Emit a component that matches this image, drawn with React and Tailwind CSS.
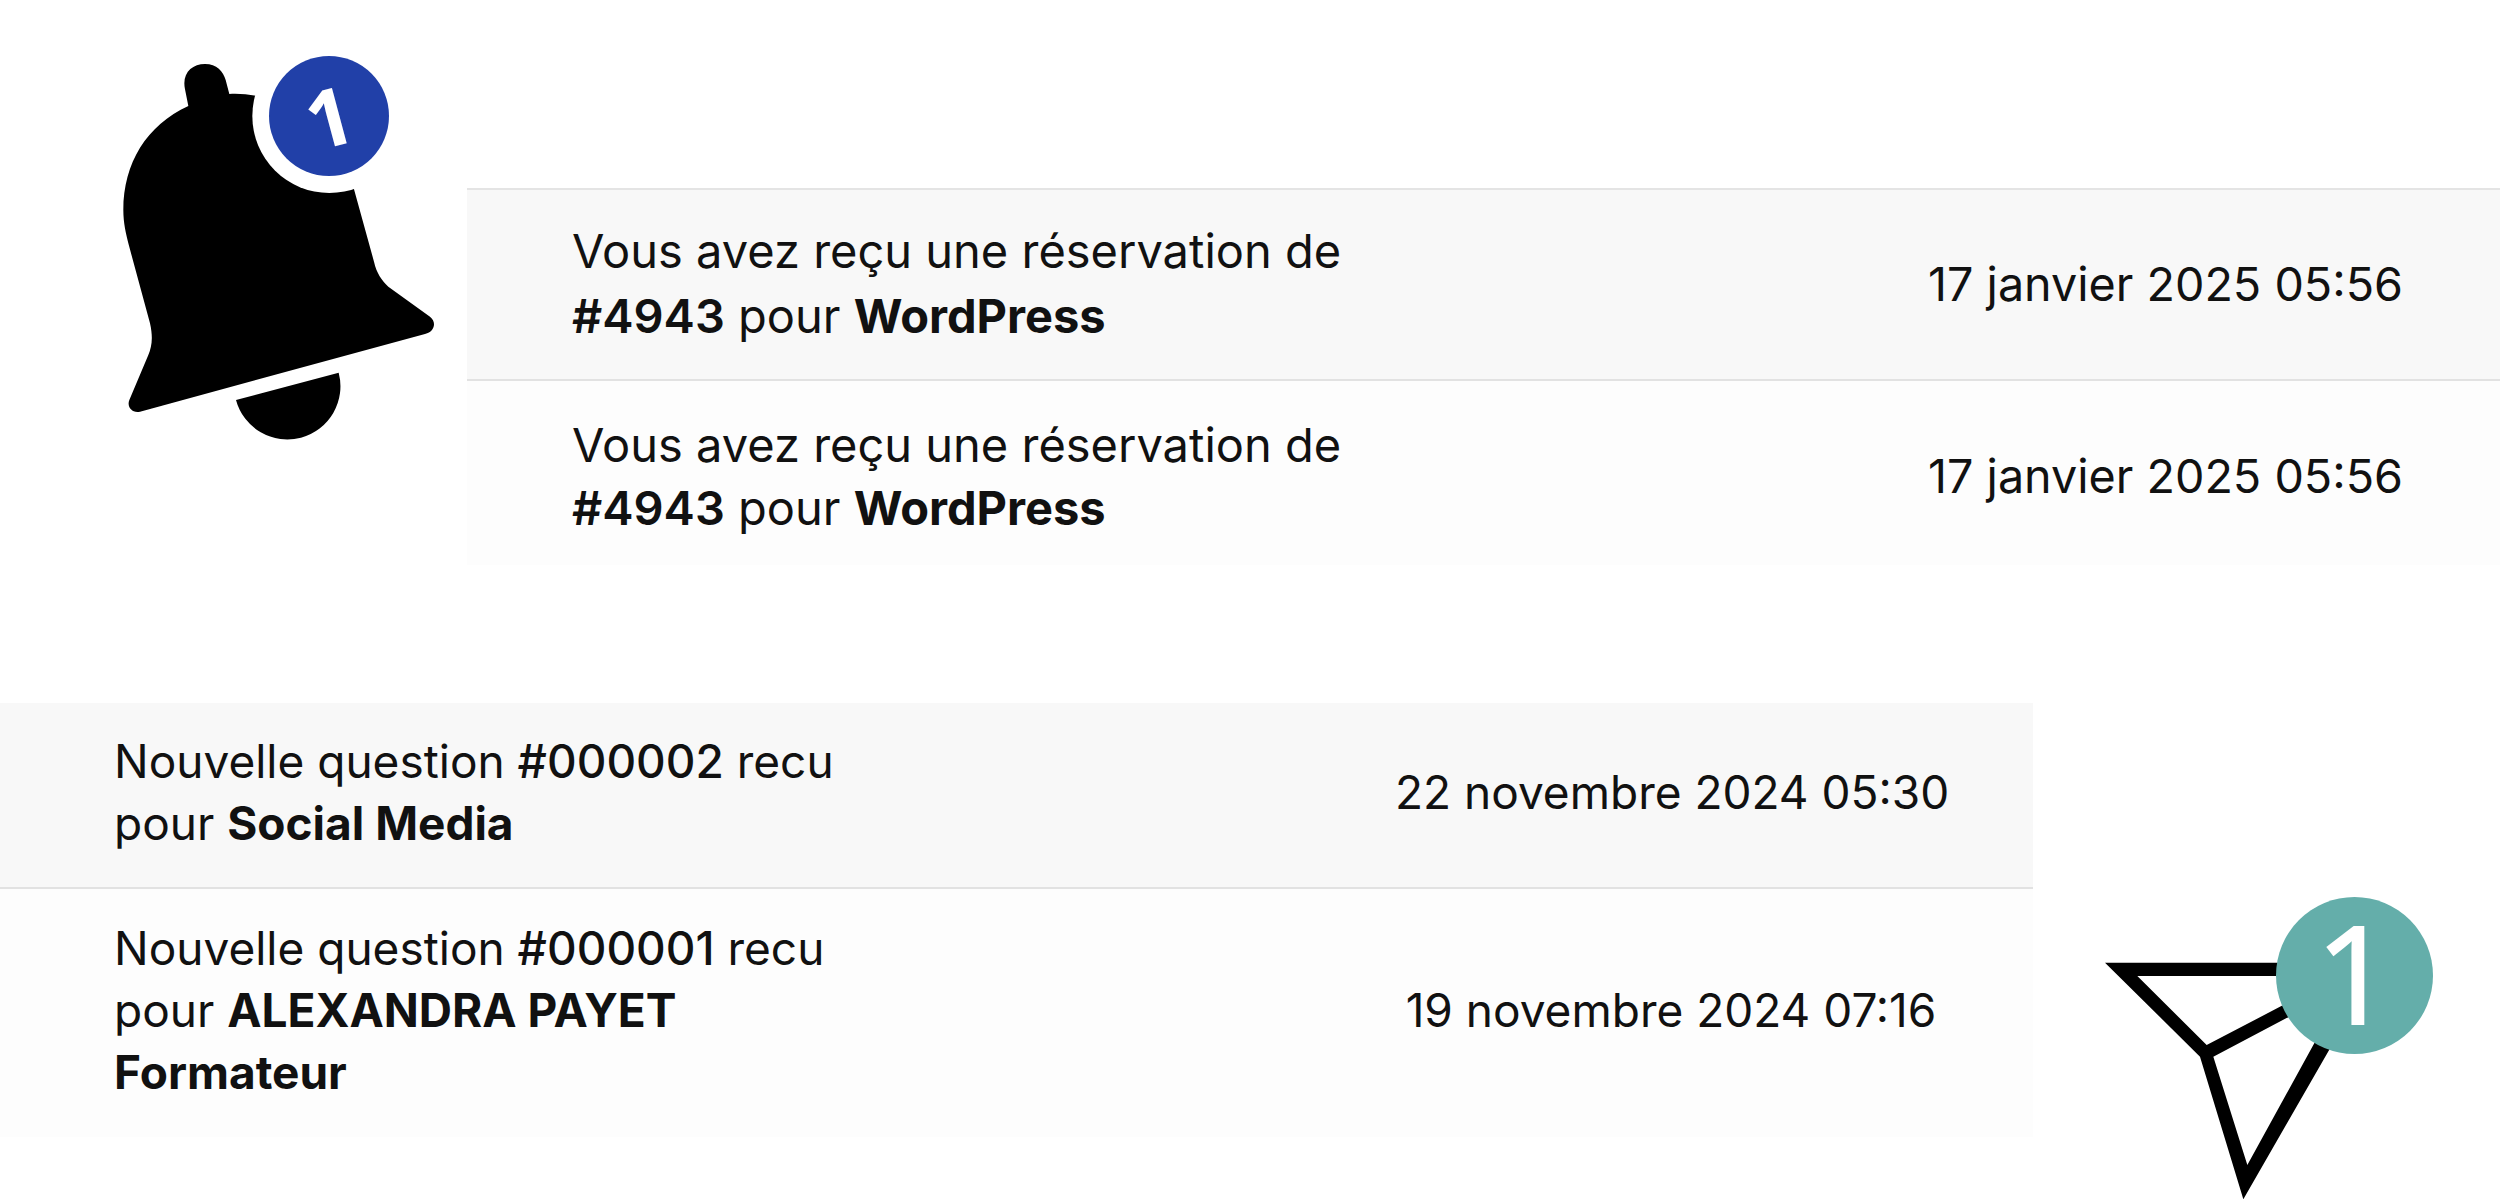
const FONT = "font-['Inter','Liberation_Sans',sans-serif]";

function BellIcon() {
  return (
    <div className="relative w-[400px] h-[440px] ml-[80px] mt-[30px] shrink-0">
      <svg viewBox="0 0 1200 1320" width="400" height="440" className="block">
        <path
          d="M325 228 L315 178 C305 130 335 102 375 102 C410 102 430 125 437 150 L448 192 C560 185 700 250 760 300 L822 478 L882 695 C890 730 905 750 925 770 L1050 860 C1070 875 1065 905 1035 912 L180 1145 C155 1150 140 1130 148 1110 L205 975 C215 950 220 925 210 880 L145 640 C138 610 130 580 130 540 C130 400 200 285 325 228 Z"
          fill="#000"
        />
        <path d="M468 1110 L776 1028 A159 159 0 0 1 468 1110 Z" fill="#000" />
        <circle cx="748" cy="258" r="231" fill="#fff" />
      </svg>
      <div className="absolute left-[189px] top-[26px] w-[120px] h-[120px] rounded-full bg-[#2140a8] flex items-center justify-center">
        <span className="text-white text-[80px] leading-none font-bold font-['Open_Sans',sans-serif] -rotate-[15deg]">1</span>
      </div>
    </div>
  );
}

function PlaneIcon() {
  return (
    <div className="relative w-[450px] h-[330px] ml-[17px] mt-[167px] shrink-0">
      <svg viewBox="0 0 1350 990" width="450" height="330" className="block">
        <path
          fillRule="evenodd"
          d="M165 278 L988 278 L580 988 L450 560 Z M262 318 L800 318 L800 353 L470 525 Z M490 560 L885 352 L592 885 Z"
          fill="#000"
        />
      </svg>
      <div className="absolute left-[226px] top-[27px] w-[157px] h-[157px] rounded-full bg-[#64aeaa] flex items-center justify-center">
        <span className="text-white text-[136px] leading-none font-normal mb-[8px] [-webkit-text-stroke:2px_white] font-['Open_Sans',sans-serif]">1</span>
      </div>
    </div>
  );
}

function Row({ children, date, className, textClass, dateClass }) {
  return (
    <div className={`flex items-center justify-between text-[#111] ${className}`}>
      <p className={textClass}>{children}</p>
      <span className={`whitespace-nowrap ${dateClass}`}>{date}</span>
    </div>
  );
}

export default function App() {
  const topDate = 'pr-[97px] text-[46.7px]';
  const botText = 'pl-[114px] text-[46px] leading-[62px]';
  const botDate = 'w-[552px] mr-[86px] text-center text-[46px]';

  return (
    <div className={`w-[2500px] h-[1200px] bg-white overflow-hidden ${FONT}`}>
      <div className="flex items-start h-[703px]">
        <BellIcon />
        <div className="mt-[188px] ml-[-13px] flex-1 border-t-2 border-[#e4e4e4]">
          <Row
            date="17 janvier 2025 05:56"
            className="h-[191px] bg-[#f8f8f8] border-b-2 border-[#e2e2e2]"
            textClass="pl-[105px] mb-[3px] text-[47px] leading-[65px]"
            dateClass={topDate}
          >
            Vous avez reçu une réservation de
            <br />
            <b className="font-semibold">#4943</b> pour <b className="font-bold">WordPress</b>
          </Row>
          <Row
            date="17 janvier 2025 05:56"
            className="h-[184px] pt-[6px] bg-[#fdfdfd]"
            textClass="pl-[105px] text-[47px] leading-[63px]"
            dateClass={topDate}
          >
            Vous avez reçu une réservation de
            <br />
            <b className="font-semibold">#4943</b> pour <b className="font-bold">WordPress</b>
          </Row>
        </div>
      </div>
      <div className="flex items-start">
        <div className="w-[2033px] shrink-0">
          <Row
            date="22 novembre 2024 05:30"
            className="h-[186px] pb-[6px] bg-[#f8f8f8] border-b-2 border-[#e2e2e2]"
            textClass={botText}
            dateClass={botDate}
          >
            Nouvelle question <b className="font-medium">#000002</b> recu
            <br />
            pour <b className="font-bold">Social Media</b>
          </Row>
          <Row
            date="19 novembre 2024 07:16"
            className="h-[248px] pb-[6px] bg-[#fdfdfd]"
            textClass={botText}
            dateClass={botDate}
          >
            Nouvelle question <b className="font-medium">#000001</b> recu
            <br />
            pour <b className="font-bold">ALEXANDRA PAYET</b>
            <br />
            <b className="font-bold">Formateur</b>
          </Row>
        </div>
        <PlaneIcon />
      </div>
    </div>
  );
}
